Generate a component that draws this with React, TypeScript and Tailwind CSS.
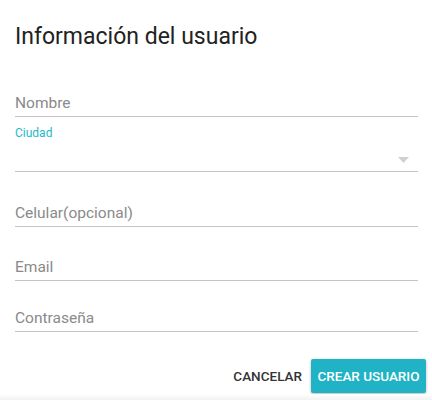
import React from "react";

function Field({ label, mt }: { label: string; mt: string }) {
  return (
    <div className={`${mt} border-b border-[#c4c4c4] pb-[2px] text-[15.5px] leading-[22px] text-[#8a8a8a]`}>
      {label}
    </div>
  );
}

export default function App() {
  return (
    <div
      className="w-[432px] h-[400px] bg-white relative overflow-hidden"
      style={{ fontFamily: "Roboto, 'Noto Sans', sans-serif" }}
    >
      <div className="pl-[15px] pr-[14px]">
        <div className="pt-[21px] text-[23px] leading-[32px] text-[#222222]">
          Información del usuario
        </div>
        <Field label="Nombre" mt="mt-[39px]" />
        <div className="mt-[8px] text-[12px] leading-[16px] text-[#26b8ca]">Ciudad</div>
        <div className="h-[31px] border-b border-[#c4c4c4] flex items-center justify-end pr-[9px]">
          <svg width="11" height="6" viewBox="0 0 11 6" className="mt-[7px]">
            <path d="M0 0 L11 0 L5.5 6 Z" fill="#d0d0d0" />
          </svg>
        </div>
        <Field label="Celular(opcional)" mt="mt-[30px]" />
        <Field label="Email" mt="mt-[29px]" />
        <Field label="Contraseña" mt="mt-[26px]" />
      </div>
      <div className="flex justify-end items-center pr-[6px] mt-[27px] gap-[9px]">
        <button className="text-[13.5px] font-medium text-[#333333] uppercase px-0">Cancelar</button>
        <button className="h-[34px] w-[115px] bg-[#1fb3c5] text-white text-[13.5px] font-medium uppercase rounded-[2px] shadow-[0_1px_3px_rgba(0,0,0,0.3)]">
          Crear usuario
        </button>
      </div>
      <div className="absolute left-0 right-0 bottom-0 h-[6px] bg-gradient-to-b from-white to-[#f2f2f2]" />
    </div>
  );
}
